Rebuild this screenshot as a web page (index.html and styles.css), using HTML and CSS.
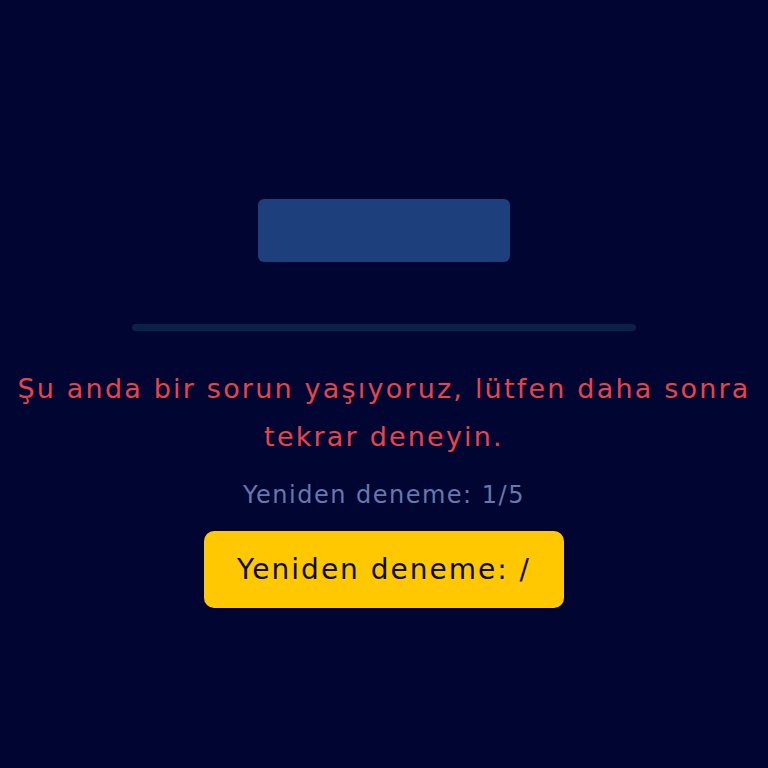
FILE: index.html
```html
<!DOCTYPE html>
<html lang="tr">
<head>
  <meta charset="UTF-8">
  <title>Hata</title>
  <meta name="viewport" content="width=device-width, initial-scale=1.0">
  <link rel="stylesheet" href="styles.css">
</head>
<body>
  <main class="error-page">
    <div class="logo-box"></div>
    <div class="progress"></div>
    <p class="error-msg">Şu anda bir sorun yaşıyoruz, lütfen daha sonra tekrar deneyin.</p>
    <p class="retry-count">Yeniden deneme: 1/5</p>
    <button class="retry-btn">Yeniden deneme: /</button>
  </main>
</body>
</html>
```

FILE: styles.css
```css
/* Hata sayfası */
html, body {
  margin: 0;
  padding: 0;
  height: 100%;
}
body {
  background: #000631;
  font-family: "DejaVu Sans", "Noto Sans", sans-serif;
}
.error-page {
  display: flex;
  flex-direction: column;
  align-items: center;
  padding: 199px 8px 0;
}
.logo-box {
  width: 252px;
  height: 63px;
  background: #1d3f7b;
  border-radius: 6px;
}
.progress {
  width: 504px;
  height: 7px;
  margin-top: 62px;
  background: #0a2246;
  border-radius: 4px;
}
.error-msg {
  margin: 34px 0 0;
  max-width: 752px;
  text-align: center;
  color: #e8434a;
  font-size: 27px;
  letter-spacing: 2.2px;
  line-height: 48px;
}
.retry-count {
  margin: 17px 0 0;
  color: #6479ad;
  font-size: 24px;
  letter-spacing: 1.5px;
  line-height: 34px;
}
.retry-btn {
  margin-top: 19px;
  width: 360px;
  height: 77px;
  border: none;
  border-radius: 10px;
  background: #ffc800;
  color: #0c0c14;
  font-family: inherit;
  font-size: 28px;
  letter-spacing: 2px;
}
```
